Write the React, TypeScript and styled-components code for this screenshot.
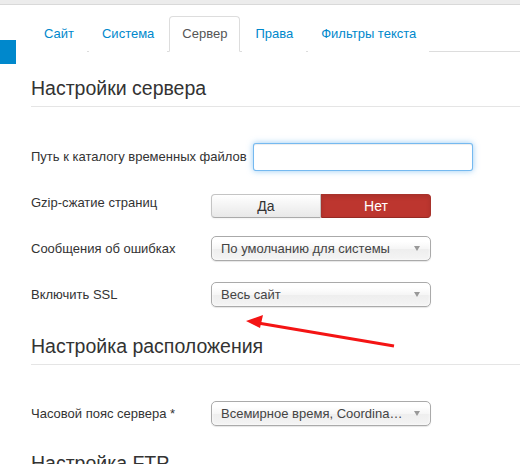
import React from 'react';
import styled, { createGlobalStyle } from 'styled-components';

const GlobalStyle = createGlobalStyle`
  html, body {
    margin: 0;
    padding: 0;
    background: #fff;
  }
  body {
    font-family: "Liberation Sans", Arial, sans-serif;
    font-size: 13px;
    line-height: 18px;
    color: #333;
  }
`;

const tabs = ['Сайт', 'Система', 'Сервер', 'Права', 'Фильтры текста'];

function App() {
  return (
    <>
      <GlobalStyle />
      <Page>
        <TopBar />
        <Body>
          <Sidebar>
            <SideItem />
          </Sidebar>
          <Main>
            <Tabs>
              {tabs.map((t) => (
                <Tab key={t} $active={t === 'Сервер'}>
                  {t}
                </Tab>
              ))}
            </Tabs>

            <Legend $space={18}>Настройки сервера</Legend>

            <Row $space={36}>
              <Label>Путь к каталогу временных файлов</Label>
              <TextInput type='text' />
            </Row>

            <Row $space={23}>
              <Label $lift>Gzip-сжатие страниц</Label>
              <BtnGroup>
                <Toggle>Да</Toggle>
                <Toggle $danger>Нет</Toggle>
              </BtnGroup>
            </Row>

            <Row $space={18}>
              <Label>Сообщения об ошибках</Label>
              <Select>
                <SelectText>По умолчанию для системы</SelectText>
                <Caret />
              </Select>
            </Row>

            <Row $space={21}>
              <Label>Включить SSL</Label>
              <Select>
                <SelectText>Весь сайт</SelectText>
                <Caret />
              </Select>
            </Row>

            <Legend $space={21}>Настройка расположения</Legend>

            <Row $space={36}>
              <Label>Часовой пояс сервера *</Label>
              <Select>
                <SelectText>Всемирное время, Coordinated Universal Time (UTC)</SelectText>
                <Caret />
              </Select>
            </Row>

            <Legend $space={19}>Настройка FTP</Legend>
          </Main>
        </Body>

        <Arrow width='160' height='36' viewBox='0 0 160 36'>
          <line x1='12' y1='10' x2='148' y2='33' stroke='#f41414' strokeWidth='3' />
          <polygon points='0,8 17,2 14,15' fill='#f41414' />
        </Arrow>
      </Page>
    </>
  );
}

const Page = styled.div`
  position: relative;
  width: 520px;
  height: 464px;
  overflow: hidden;
`;

const TopBar = styled.div`
  height: 4px;
  background: #ececec;
  border-bottom: 1px solid #d9d9d9;
`;

const Body = styled.div`
  display: flex;
`;

const Sidebar = styled.div`
  width: 16px;
  flex-shrink: 0;
  padding-top: 35px;
`;

const SideItem = styled.div`
  height: 24px;
  background: #0088cc;
`;

const Main = styled.div`
  flex: 1;
  margin-left: 15px;
  padding-top: 11px;
`;

const Tabs = styled.div`
  display: flex;
  border-bottom: 1px solid #ddd;
`;

const Tab = styled.div<{ $active?: boolean }>`
  padding: 8px 12px;
  line-height: 18px;
  margin-right: 2px;
  margin-bottom: -1px;
  border: 1px solid ${(p) => (p.$active ? '#ddd' : 'transparent')};
  border-bottom-color: ${(p) => (p.$active ? '#fff' : 'transparent')};
  border-radius: 4px 4px 0 0;
  background: #fff;
  color: ${(p) => (p.$active ? '#555' : '#0088cc')};
  white-space: nowrap;
`;

const Legend = styled.div<{ $space: number }>`
  margin-top: ${(p) => p.$space}px;
  font-size: 19.5px;
  line-height: 36px;
  color: #333;
  border-bottom: 1px solid #e5e5e5;
  white-space: nowrap;
`;

const Row = styled.div<{ $space: number }>`
  display: flex;
  align-items: center;
  gap: 6px;
  margin-top: ${(p) => p.$space}px;
`;

const Label = styled.div<{ $lift?: boolean }>`
  min-width: 174px;
  flex-shrink: 0;
  white-space: nowrap;
  color: #333;
  margin-top: ${(p) => (p.$lift ? '-6px' : '0')};
`;

const TextInput = styled.input`
  box-sizing: border-box;
  width: 220px;
  height: 28px;
  margin: 0;
  padding: 4px 6px;
  border: 1px solid rgba(82, 168, 236, 0.8);
  border-radius: 3px;
  background: #fff;
  outline: none;
  box-shadow: inset 0 1px 1px rgba(0, 0, 0, 0.075), 0 0 6px rgba(82, 168, 236, 0.6);
  font: inherit;
`;

const BtnGroup = styled.div`
  display: flex;
`;

const Toggle = styled.div<{ $danger?: boolean }>`
  box-sizing: border-box;
  width: 110px;
  height: 24px;
  display: flex;
  align-items: center;
  justify-content: center;
  font-size: 14px;
  color: ${(p) => (p.$danger ? '#fff' : '#333')};
  border: 1px solid ${(p) => (p.$danger ? '#a8332c' : '#c4c4c4')};
  border-bottom-color: ${(p) => (p.$danger ? '#962a24' : '#aaa')};
  background: ${(p) =>
    p.$danger ? '#bd362f' : 'linear-gradient(#ffffff, #e8e8e8)'};
  border-radius: ${(p) => (p.$danger ? '0 4px 4px 0' : '4px 0 0 4px')};
  box-shadow: ${(p) =>
    p.$danger
      ? 'inset 0 2px 4px rgba(0, 0, 0, 0.1)'
      : 'inset 0 1px 0 rgba(255, 255, 255, 0.2), 0 1px 2px rgba(0, 0, 0, 0.05)'};
`;

const Select = styled.div`
  box-sizing: border-box;
  width: 220px;
  height: 25px;
  display: flex;
  align-items: center;
  gap: 8px;
  padding: 0 10px 0 9px;
  border: 1px solid #aaa;
  border-radius: 5px;
  background: linear-gradient(#ffffff 20%, #f6f6f6 50%, #eeeeee 52%, #f4f4f4 100%);
  box-shadow: inset 0 0 3px #fff, 0 1px 1px rgba(0, 0, 0, 0.1);
  color: #444;
  font-size: 13px;
`;

const SelectText = styled.span`
  flex: 1;
  overflow: hidden;
  white-space: nowrap;
  text-overflow: ellipsis;
`;

const Caret = styled.span`
  width: 0;
  height: 0;
  flex-shrink: 0;
  border-left: 3px solid transparent;
  border-right: 3px solid transparent;
  border-top: 5px solid #999;
`;

const Arrow = styled.svg`
  position: absolute;
  left: 246px;
  top: 313px;
`;

export default App;
